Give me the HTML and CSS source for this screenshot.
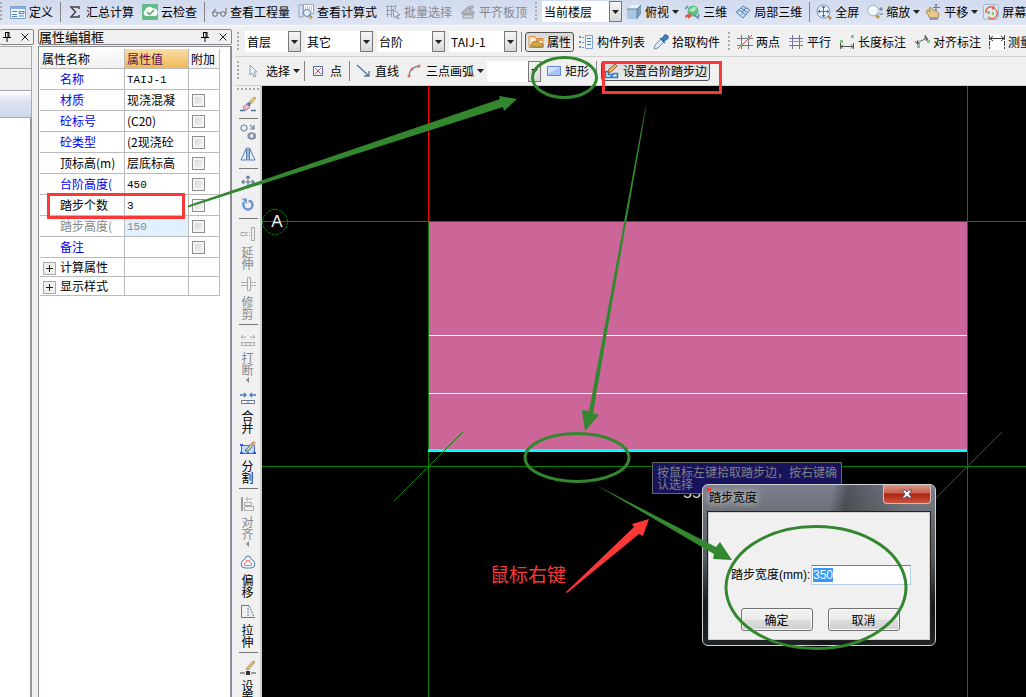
FILE: index.html
```html
<!DOCTYPE html>
<html lang="zh-CN">
<head>
<meta charset="utf-8">
<title>属性编辑框</title>
<link rel="stylesheet" href="styles.css">
</head>
<body>
<svg class="defs" width="0" height="0" aria-hidden="true">
  <symbol id="pin" viewBox="0 0 8 10"><path d="M2 .5h4M2.5 0v5M5 0v5M6 0v5M0 5.5h8M4 6v4" fill="none" stroke="#000"/></symbol>
  <symbol id="cross" viewBox="0 0 8 8"><path d="M.5.5l7 7M7.5.5l-7 7" fill="none" stroke="#222"/></symbol>
  <symbol id="down" viewBox="0 0 7 4"><path d="M0 0h7L3.500 4z" fill="#222"/></symbol>
</svg>
<div class="app">
  <header class="topbar">
    <i class="grip"></i>
    <button class="tool"><svg viewBox="0 0 16 16"><path d="M.5 2.500h15v12H.5z" fill="#f4f8fd" stroke="#7da0d0"/><path d="M1 3h14v2H1z" fill="#86aee0"/><path d="M2 7.500h5M2 10.500h5M2 12.500h5M9 7.500h5v2H9zM9 12h5" fill="none" stroke="#5580ba"/></svg>定义</button>
    <i class="sep"></i>
    <button class="tool"><svg viewBox="0 0 16 16"><path d="M12 5V3H4l4.500 5L4 13h8v-2" fill="none" stroke="#444" stroke-width="1.500"/></svg>汇总计算</button>
    <button class="tool"><svg viewBox="0 0 16 16"><rect width="16" height="16" rx="1" fill="#63bb83"/><path d="M4 12a3 3 0 0 1-1-5.500A4.500 4.500 0 0 1 11 4.500 3.500 3.500 0 0 1 12.500 12z" fill="#fff"/><path d="M5 8l2.500 2.500L12 6" fill="none" stroke="#45a96a" stroke-width="1.500"/></svg>云检查</button>
    <i class="sep"></i>
    <button class="tool"><svg viewBox="0 0 16 16"><path d="M5 5Q2 6 1.500 10M15 4v6" fill="none" stroke="#666"/><circle cx="4" cy="10" r="2.300" fill="#dfe8ee" stroke="#666"/><circle cx="12" cy="10" r="2.300" fill="#dfe8ee" stroke="#666"/><path d="M6 9.500q2-2 4 0" fill="none" stroke="#666"/></svg>查看工程量</button>
    <button class="tool"><svg viewBox="0 0 16 16"><path d="M5.500.5h10v9h-10z" fill="#fff" stroke="#9aa6ba"/><path d="M7 3h7M7 5h7M9 7h5" stroke="#8291ac" stroke-dasharray="1 1"/><path d="M1 1h4v12H1z" fill="#dce4f1" stroke="#8fa0be"/><circle cx="9" cy="9" r="3.500" fill="#e4f1fa" stroke="#557dad"/><path d="M11 11l3 3" stroke="#557dad" stroke-width="2"/><path d="M12 11l1 2 2 .5-2 .5-1 2-1-2-2-.5 2-.5z" fill="#efb036"/></svg>查看计算式</button>
    <button class="tool off" disabled><svg viewBox="0 0 16 16"><path d="M1 2.500h9M1 6.500h9M1 10.500h6M2.500 1v12M6.500 1v12M10.500 1v4" fill="none" stroke="#9aa1ae"/><path d="M8 5l7 6-3 .5 2 3-1.500.5-1.500-3-2 2z" fill="#e2e5ec" stroke="#8b919d"/></svg>批量选择</button>
    <button class="tool off" disabled><svg viewBox="0 0 16 16"><path d="M1 9l7-6 5-1v2L9 5l5 3v2H3z" fill="#b2b6bf" stroke="#969ba6"/><path d="M3 11h10v3H3z" fill="#d6d9df" stroke="#969ba6"/></svg>平齐板顶</button>
    <i class="grip wide"></i>
    <span class="combo floor"><select aria-label="楼层范围"><option>当前楼层</option></select><i><svg><use href="#down"/></svg></i></span>
    <button class="tool menu"><svg viewBox="0 0 16 16"><path d="M1 5l4-4h10v9l-4 5H1z" fill="#7c9cc0"/><path d="M1 5h10v10H1z" fill="#a8c6e2"/><path d="M1 5l4-4h10l-4 4z" fill="#e8f1f8"/><path d="M1 5h10v10M11 5l4-4" fill="none" stroke="#5f81a8"/></svg>俯视<svg class="arrow"><use href="#down"/></svg></button>
    <button class="tool"><svg viewBox="0 0 16 16"><circle cx="9" cy="7" r="5.500" fill="#5ebf83"/><path d="M5 7Q8 1 13 4L10 8z" fill="#abe6bd"/><path d="M1 5l3-3M15 10l-1 4-4-3" fill="none" stroke="#6283ac" stroke-width="1.500"/><path d="M1 14q0-4 4-4v-2l3 4-4 3v-2z" fill="#d4594a"/></svg>三维</button>
    <button class="tool"><svg viewBox="0 0 16 16"><path d="M1 8l7-6 7 4-7 8z" fill="#c5dcef" stroke="#5c88b6"/><path d="M4 6l7 5M6 4l7 5M4 11l7-7" stroke="#4b79ab"/><circle cx="5" cy="9" r="2" fill="#eef7fd" stroke="#7297c0"/></svg>局部三维</button>
    <i class="sep"></i>
    <button class="tool"><svg viewBox="0 0 16 16"><path d="M12 12l3 3" stroke="#b98a4c" stroke-width="2.500"/><circle cx="7.500" cy="7.500" r="6.500" fill="#eaf3fb" stroke="#7d95b8"/><path d="M7.500 2v11M2 7.500h11M6 4l1.500-2L9 4M6 11l1.500 2L9 11M4 6L2 7.500 4 9M11 6l2 1.500L11 9" fill="none" stroke="#4770a6"/></svg>全屏</button>
    <button class="tool menu"><svg viewBox="0 0 16 16"><path d="M9 11l3 3" stroke="#c09055" stroke-width="3"/><circle cx="6" cy="6.500" r="5.300" fill="#f4fafe" stroke="#a0b1c5"/><path d="M14 3v4M12 5h4M12 10h4" stroke="#5c7292"/></svg>缩放<svg class="arrow"><use href="#down"/></svg></button>
    <button class="tool menu"><svg viewBox="0 0 16 16"><path d="M1 7l2-1 2 2-1-4 2-.5 2 3 1-1 5 4-1 5H5z" fill="#e6c888" stroke="#ad8b50"/><path d="M4 13h9v3H5z" fill="#8b9db8"/><path d="M11 0v7M8 3.500h7M10 1.500L11 0l1 1.500" fill="none" stroke="#66758e"/></svg>平移<svg class="arrow"><use href="#down"/></svg></button>
    <button class="tool"><svg viewBox="0 0 16 16"><rect x=".5" y=".5" width="15" height="15" rx="2" fill="#d8e8f1" stroke="#9cb9cf"/><path d="M3 9a5 5 0 0 1 8-5M13 6a5 5 0 0 1-8 7" fill="none" stroke="#ea6551" stroke-width="1.500"/><path d="M10 1l3 4-4 1z" fill="#ea6551"/><path d="M4 7h3v3H4zM9 8h2v3H9z" fill="#9ac36d"/></svg>屏幕</button>
  </header>

  <div class="body">
    <aside class="dock">
      <div class="caption"><svg class="pin"><use href="#pin"/></svg><svg class="x"><use href="#cross"/></svg></div>
      <div class="tabs"><i></i><i></i><i class="sel"></i></div>
      <div class="blank"></div>
    </aside>

    <aside class="panel">
      <div class="caption"><h1>属性编辑框</h1><svg class="pin"><use href="#pin"/></svg><svg class="x"><use href="#cross"/></svg></div>
      <div class="sheet">
        <table>
          <colgroup><col class="c1"><col class="c2"><col class="c3"></colgroup>
          <thead><tr><th>属性名称</th><th class="hot">属性值</th><th>附加</th></tr></thead>
          <tbody>
            <tr><th>名称</th><td><span class="code">TAIJ-1</span></td><td></td></tr>
            <tr><th>材质</th><td>现浇混凝</td><td><input type="checkbox" aria-label="材质附加"></td></tr>
            <tr><th>砼标号</th><td>(C20)</td><td><input type="checkbox" aria-label="砼标号附加"></td></tr>
            <tr><th>砼类型</th><td>(2现浇砼</td><td><input type="checkbox" aria-label="砼类型附加"></td></tr>
            <tr class="plain"><th>顶标高(m)</th><td>层底标高</td><td><input type="checkbox" aria-label="顶标高附加"></td></tr>
            <tr><th>台阶高度(</th><td><span class="code">450</span></td><td><input type="checkbox" aria-label="台阶高度附加"></td></tr>
            <tr class="plain"><th>踏步个数</th><td><span class="code">3</span></td><td><input type="checkbox" aria-label="踏步个数附加"></td></tr>
            <tr class="dim"><th>踏步高度(</th><td><span class="code">150</span></td><td><input type="checkbox" aria-label="踏步高度附加"></td></tr>
            <tr><th>备注</th><td></td><td><input type="checkbox" aria-label="备注附加"></td></tr>
            <tr class="group"><th><button class="plus" aria-label="展开计算属性"></button>计算属性</th><td></td><td></td></tr>
            <tr class="group"><th><button class="plus" aria-label="展开显示样式"></button>显示样式</th><td></td><td></td></tr>
          </tbody>
        </table>
      </div>
    </aside>

    <main class="work">
      <div class="bar">
        <i class="grip"></i>
        <span class="combo first"><select aria-label="楼层"><option>首层</option></select><i><svg><use href="#down"/></svg></i></span>
        <span class="combo"><select aria-label="类别"><option>其它</option></select><i><svg><use href="#down"/></svg></i></span>
        <span class="combo"><select aria-label="构件类型"><option>台阶</option></select><i><svg><use href="#down"/></svg></i></span>
        <span class="combo"><select aria-label="构件"><option>TAIJ-1</option></select><i><svg><use href="#down"/></svg></i></span>
        <i class="sep"></i>
        <button class="tool pressed"><svg viewBox="0 0 16 16"><path d="M1 2.500h6l1 2h7v9H1z" fill="#fbe7c1" stroke="#d98a46"/><path d="M8 5h7v2H8z" fill="#e8a15d"/><path d="M2 12l3-4 5-1 1 2 4 1v3H5z" fill="#d2a63f" stroke="#7b6a34" stroke-width=".7"/></svg>属性</button>
        <button class="tool"><svg viewBox="0 0 16 16"><path d="M1 2h2v2H1zM1 7h2v2H1zM1 12h2v2H1z" fill="#7b8daa"/><path d="M4 3.500h2M4 8.500h2M4 13.500h2" stroke="#7b8daa"/><path d="M7.500 1.500h7v13h-7z" fill="#eef4fc" stroke="#83a0c8"/><path d="M9 4.500h4M9 7.500h4M9 10.500h4" stroke="#4a78b5"/></svg>构件列表</button>
        <button class="tool"><svg viewBox="0 0 16 16"><path d="M1 15l1-4 6-6 3 3-6 6z" fill="#d8eafa" stroke="#7192b8"/><path d="M7 4l5 5M9 5l3-4q3 0 3 3l-4 3z" fill="#4a83c3" stroke="#396fa9" stroke-width="1.500"/></svg>拾取构件</button>
        <i class="grip wide"></i>
        <button class="tool"><svg viewBox="0 0 16 16"><path d="M4.500 1v14M11.500 1v14M0 4.500h16M0 11.500h16" stroke="#747486"/><path d="M1 15L15 1" stroke="#c14c4c"/><circle cx="4.500" cy="11.500" r="1.500" fill="#65b66c"/><circle cx="11.500" cy="4.500" r="1.500" fill="#65b66c"/></svg>两点</button>
        <button class="tool"><svg viewBox="0 0 16 16"><path d="M4.500 1v14M11.500 1v14M1 4.500h14M1 11.500h14" stroke="#70749a"/><path d="M1 7.500h14" stroke="#d67c7c"/></svg>平行</button>
        <button class="tool"><svg viewBox="0 0 16 16"><path d="M1.500 9v6M14.500 9v6M1 12.500h14M4 10.500l-2 2 2 2M12 10.500l2 2-2 2" fill="none" stroke="#555"/><path d="M1 6h3v3H1zM12 1h3v3h-3z" fill="#7cc87c"/></svg>长度标注</button>
        <button class="tool"><svg viewBox="0 0 16 16"><path d="M1 7l3 4M11 1l3 5M3 9l10-5M4 6L3 9l3 1M10 3l3 1-1 3" fill="none" stroke="#555"/><path d="M3 11h3v3H3zM13 6h3v3h-3z" fill="#7cc87c"/></svg>对齐标注</button>
        <button class="tool"><svg viewBox="0 0 16 16"><path d="M0 0h16v16H0z" fill="#fff"/><path d="M.5 1v14M15.500 1v14" stroke="#444" stroke-dasharray="5 1"/><path d="M1 4.500h14M4 2L1 4.500 4 7M12 2l3 2.500L12 7" fill="none" stroke="#333"/></svg>测量</button>
      </div>
      <div class="bar draw">
        <i class="grip"></i>
        <button class="tool menu"><svg viewBox="0 0 16 16"><path d="M3 2v10l2-2 2 4 2-1-2-4h3z" fill="#f5f8fb" stroke="#8e9eb2"/></svg>选择<svg class="arrow"><use href="#down"/></svg></button>
        <i class="sep"></i>
        <button class="tool"><svg viewBox="0 0 16 16"><path d="M2.500 3.500h9v9h-9z" fill="#f4f7ff" stroke="#5565a5"/><path d="M4 5l6 6M10 5l-6 6" stroke="#c44b5a"/></svg>点</button>
        <i class="sep"></i>
        <button class="tool"><svg viewBox="0 0 16 16"><path d="M1 2l12 11M13 8v5H8" fill="none" stroke="#4c75a7" stroke-width="1.300"/></svg>直线</button>
        <button class="tool menu"><svg viewBox="0 0 16 16"><path d="M2 14Q2 4 13 3" fill="none" stroke="#7190b3" stroke-width="1.300"/><circle cx="2" cy="13" r="1.500" fill="#e16a50"/><circle cx="5" cy="6" r="1.500" fill="#e16a50"/><circle cx="12" cy="3" r="1.500" fill="#e16a50"/></svg>三点画弧<svg class="arrow"><use href="#down"/></svg></button>
        <span class="combo first"><select aria-label="画弧参数"><option></option></select><i><svg><use href="#down"/></svg></i></span>
        <button class="tool"><svg viewBox="0 0 16 16"><path d="M1.500 3.500h13v9h-13z" fill="#a9c6f8" stroke="#6488cf"/><path d="M2 4h12L2 11z" fill="#cfdffc"/></svg>矩形</button>
        <i class="sep"></i>
        <button class="tool pressed"><svg viewBox="0 0 16 16"><path d="M1.500 14.500v-6h3v3h4M1.500 14.500h12v-4h-3M7 14l3-4" fill="#c5e4f7" stroke="#2b7bbd" stroke-width="1.500"/><path d="M4 10l1-4 6-5 2 2-6 6z" fill="#f0b35e" stroke="#935e35"/></svg>设置台阶踏步边</button>
      </div>

      <div class="stage">
        <nav class="side">
          <i class="hgrip"></i>
          <button aria-label="删除"><svg viewBox="0 0 16 16"><path d="M0 14.500h5M11 14.500h5" stroke="#53749c" stroke-width="1.500"/><path d="M9 6l5-5 2 1-5 6z" fill="#eac46e" stroke="#a57c44" stroke-width=".6"/><path d="M6 8l3-2 2 2-2 3z" fill="#527db8"/><path d="M3 11l4-3 3 3-3 3H4z" fill="#e8b5cb" stroke="#9a6580" stroke-width=".7"/></svg></button>
          <i class="hsep"></i>
          <button aria-label="复制"><svg viewBox="0 0 16 16"><g fill="none" stroke="#7289a5" stroke-width="1.200"><circle cx="4" cy="4" r="3"/><circle cx="11" cy="12" r="3"/><circle cx="12.500" cy="12" r="3"/><path d="M10 1l4 4M14 1v4h-4"/></g></svg></button>
          <button aria-label="镜像"><svg viewBox="0 0 16 16"><path d="M6.500 2v12H1zM9.500 2v12H15z" fill="#e9f1fc" stroke="#547db4"/><path d="M8 1v14" stroke="#547db4"/></svg></button>
          <i class="hsep"></i>
          <button aria-label="移动"><svg viewBox="0 0 16 16"><path d="M8 2v12M2 8h12M6 4l2-2 2 2M6 12l2 2 2-2M4 6L2 8l2 2M12 6l2 2-2 2" fill="none" stroke="#61799a" stroke-width="1.200"/></svg></button>
          <button aria-label="旋转"><svg viewBox="0 0 16 16"><path d="M3.500 6v3a4.500 4.500 0 0 0 9 0q0-4-4-4" fill="none" stroke="#7297d4" stroke-width="2.500"/><path d="M1.500 2.500H7V8z" fill="#7297d4"/></svg></button>
          <i class="hsep"></i>
          <button class="tall off"><svg viewBox="0 0 16 16"><path d="M11.500 1.500h3v13h-3zM1 6.500h5v3H1z" fill="none" stroke="#aaa"/><path d="M7 6.500h4M7 9.500h4" stroke="#aaa" stroke-dasharray="1 1"/></svg><span>延伸</span></button>
          <button class="tall off"><svg viewBox="0 0 16 16"><path d="M7.500 1.500h3v13h-3z" fill="none" stroke="#aaa"/><path d="M1 6.500h6M1 9.500h6" stroke="#aaa"/><path d="M11 6.500h5M11 9.500h5" stroke="#aaa" stroke-dasharray="2 1"/></svg><span>修剪</span></button>
          <i class="hsep"></i>
          <button class="tall more off"><svg viewBox="0 0 16 16"><path d="M1 5h5M10 5h5M3 3L1 5l2 2M13 3l2 2-2 2M1.500 10.500h13v3h-13zM6 10v4M10 10v4" fill="none" stroke="#aaa"/></svg><span>打断</span></button>
          <button class="tall"><svg viewBox="0 0 16 16"><path d="M0 5h6M10 5h6M4 3l2 2-2 2M12 3l-2 2 2 2" fill="none" stroke="#4c78bd" stroke-width="1.300"/><path d="M1.500 10.500h13v3h-13zM8 10v4" fill="#fff" stroke="#65799d"/></svg><span>合并</span></button>
          <button class="tall"><svg viewBox="0 0 16 16"><path d="M1.500 5.500h13v8h-13z" fill="#b9dbff" stroke="#466bdc"/><path d="M0 4h3v2H0zM0 12h3v2H0zM7 12h2v2H7zM13 12h3v2h-3z" fill="#3c55db"/><path d="M5 11l8-9 2 1-7 8z" fill="#eadfca" stroke="#5b5b51"/><path d="M11 4l3-3 2 2-3 3z" fill="#e2a07a"/></svg><span>分割</span></button>
          <i class="hsep"></i>
          <button class="tall more off"><svg viewBox="0 0 16 16"><path d="M2 1v14" stroke="#999" stroke-width="2"/><path d="M4.500 6.500h7v3h-7zM4.500 10.500h9v4h-9zM6 3h6M8 1L6 3l2 2" fill="none" stroke="#aaa"/></svg><span>对齐</span></button>
          <button class="tall"><svg viewBox="0 0 16 16"><path d="M5 5a3 3 0 0 1 6 0q4 2 4 5 0 4-4 4H5q-4 0-4-4 0-3 4-5z" fill="#eef6fd" stroke="#5680ad"/><path d="M6.500 6.500h3v2q3 0 2 3h-7q-1-3 2-3z" fill="#fff" stroke="#e27a70"/></svg><span>偏移</span></button>
          <button class="tall"><svg viewBox="0 0 16 16"><path d="M9 1.500H1.500v12H15" fill="none" stroke="#547da8"/><path d="M9 2l5 11M8 4v8" fill="none" stroke="#547da8" stroke-dasharray="2 1"/></svg><span>拉伸</span></button>
          <i class="hsep"></i>
          <button class="tall"><svg viewBox="0 0 16 16"><path d="M0 13h5M11 13h5" stroke="#444"/><path d="M6 11h4v4H6z" fill="#333"/><path d="M6 9l7-8 2 1-7 8z" fill="#e9c36f" stroke="#9c7444" stroke-width=".7"/></svg><span>设置</span></button>
        </nav>

        <div class="canvas">
          <svg class="plan" width="764" height="611" viewBox="262 86 764 611">
            <path d="M429 222h538v228H429z" fill="#cc6699"/>
            <g shape-rendering="crispEdges" fill="none">
              <path d="M429 335.500h538M429 393.500h538" stroke="#fff"/>
              <path d="M428.500 222v475M967.500 222v475M262 466.500h2000" stroke="#008000"/>
              <path d="M428.500 86v136M967.500 86v136M262 221.500h2000" stroke="#f00"/>
              <path d="M428 450.500h539" stroke="#0ff" stroke-width="3"/>
              <path d="M394 501l69-69M933 501l69-69" stroke="#008000"/>
            </g>
            <path d="M275 209l6 2 5 5 2 6-2 6-5 5-6 2-6-2-5-5-2-6 2-6 5-5z" fill="none" stroke="#008000" stroke-dasharray="3 1"/>
            <text class="axis" x="277" y="227" text-anchor="middle">A</text>
            <text class="dim-text" x="683" y="498">55</text>
          </svg>
          <p class="hint">按鼠标左键拾取踏步边，按右键确认选择</p>
          <form class="dialog">
            <header><h2>踏步宽度</h2><button type="button" class="close" aria-label="关闭"><svg viewBox="0 0 12 10"><path d="M1 1h3l2 2 2-2h3L8 5l3 4H8L6 7 4 9H1l3-4z" fill="#fff" stroke="#545367"/></svg></button></header>
            <div class="client">
              <div class="field"><label for="w">踏步宽度(mm):</label><input id="w" type="text" value="350"></div>
              <div class="actions"><button type="button">确定</button><button type="button">取消</button></div>
            </div>
          </form>
        </div>
      </div>
    </main>
  </div>

  <svg class="notes" width="1026" height="697" viewBox="0 0 1026 697" aria-hidden="true">
    <defs><linearGradient id="fade" x1="0" y1="100" x2="0" y2="135" gradientUnits="userSpaceOnUse"><stop offset="0" stop-color="#32872f" stop-opacity=".3"/><stop offset="1" stop-color="#32872f"/></linearGradient></defs>
    <g fill="none" stroke="#fb3838" stroke-width="3"><path d="M48.500 194.500h135v23h-135zM603.500 62.500h117v30h-117z"/></g>
    <g fill="none" stroke="#32872f" stroke-width="3"><ellipse cx="564.500" cy="77.500" rx="32" ry="20"/><ellipse cx="577" cy="457.500" rx="52" ry="24"/><ellipse cx="816" cy="587.500" rx="90" ry="61"/></g>
    <g fill="#32872f"><path d="M188 205.500L500 99l-1-3 18 3-13 12-1-4L188 207.500z"/><path fill="url(#fade)" d="M645.500 106L589 411l-7-1 3 21 14-16-6-2L646.500 106z"/><path d="M596 485l120 62 4-5 12 18-19-1 1-5z"/></g>
    <path d="M566 592l68-65-2-3 17-5-6 17-4-2-72 59z" fill="#fb3838"/>
    <path d="M707 488h4v3h-4z" fill="#fb3838"/>
    <text class="note" x="490" y="582">鼠标右键</text>
  </svg>
</div>
</body>
</html>
```

FILE: styles.css
```css
* { box-sizing: border-box; }
body { margin: 0; font: 12px/16px "Noto Sans CJK SC", sans-serif; color: #000; background: #f0f0f0; }
button, select, input { font: inherit; color: inherit; }
i { font-style: normal; }
h1, h2, p { margin: 0; font-weight: normal; }
.defs { position: absolute; }
.app { position: relative; display: flex; flex-direction: column; height: 100vh; overflow: hidden; }

/* toolbars */
.topbar, .bar { display: flex; align-items: center; overflow: hidden; flex: none; white-space: nowrap; }
.topbar { height: 26px; padding-bottom: 2px; background: linear-gradient(#d2daee, #dfe5f4); border-bottom: 1px solid #f8f9fc; }
.bar { height: 30px; padding-left: 2px; background: #f0f0f0; border-bottom: 1px solid #d0d0d0; }
.bar.draw { height: 29px; }
.tool { display: flex; flex: none; align-items: center; gap: 3px; height: 20px; padding: 0 4px; border: 0; background: none; }
.tool svg { width: 16px; height: 16px; flex: none; }
.tool .arrow { width: 7px; height: 4px; }
.tool.menu { padding-right: 1px; }
.tool.off, .side .off { color: #85888f; }
.tool.pressed { padding: 0 2px; border: 1px solid #505050; border-radius: 3px; background: linear-gradient(#d8d8d8, #eee); }
.draw .pressed { margin-left: 2px; }
.sep { flex: none; width: 1px; height: 20px; margin: 0 2px 0 3px; background: #858585; }
.bar:not(.draw) .sep { margin: 0 3px 0 0; }
.grip { flex: none; width: 2px; height: 20px; margin-right: 4px; background: repeating-linear-gradient(#aaa 0 2px, transparent 2px 4px); }
.grip.wide { margin: 0 5px 0 4px; }
.bar .grip.wide { margin: 0 3px 0 4px; }
.combo { position: relative; flex: none; width: 68px; height: 21px; margin-right: 4px; }
.combo.first { width: 56px; margin-left: 2px; }
.draw .combo.first { width: 54px; margin-right: 1px; }
.combo.floor { width: 80px; margin-right: 0; }
.combo select { width: 100%; height: 21px; padding: 0 0 0 2px; border: 0; background: #fff; appearance: none; }
.combo i { position: absolute; top: 0; right: 0; display: flex; align-items: center; justify-content: center; width: 13px; height: 21px; border: 1px solid #777; background: linear-gradient(#f5f5f5, #d8d8d8); pointer-events: none; }
.combo i svg { width: 7px; height: 4px; }

/* docked panels */
.body { display: flex; flex: 1; min-height: 0; }
.caption { display: flex; align-items: center; height: 16px; border: 1px solid #858585; border-radius: 2px; background: #f0f0f0; }
.caption h1 { flex: 1; font-size: 13px; line-height: 14px; }
.caption .pin { width: 8px; height: 10px; }
.caption .x { width: 8px; height: 8px; margin: 0 4px 0 10px; }
.dock { display: flex; flex-direction: column; width: 36px; flex: none; padding: 3px 2px 0 0; background: #f0f0f0; }
.dock .caption { justify-content: flex-end; border-left: 0; }
.tabs { display: grid; grid-template-rows: 22px 22px 27px; margin: 1px 2px 0 0; border: 1px solid #aaa; border-width: 1px 1px 0 0; }
.tabs i { border-bottom: 1px solid #a8a8a8; }
.tabs .sel { background: linear-gradient(#fff, #dce3f3 40%, #cfd8ec); }
.blank { flex: 1; margin-right: 2px; background: #fff; border-right: 2px solid #9595a0; }
.panel { display: flex; flex-direction: column; width: 196px; flex: none; padding: 3px 0 0 2px; }
.sheet { flex: 1; margin-top: 1px; padding: 2px 0 0 1px; background: #fff; border: solid #8c8c94; border-width: 1px 2px 0 1px; }
table { width: 180px; border-collapse: separate; border-spacing: 0; table-layout: fixed; }
.c1 { width: 85px; }
.c2 { width: 64px; }
.c3 { width: 31px; }
th, td { height: 21px; padding: 0 0 0 2px; border: solid #bbb; border-width: 0 1px 1px 0; font-weight: normal; text-align: left; line-height: 16px; white-space: nowrap; overflow: hidden; }
thead th { height: 20px; background: linear-gradient(#fcfcfc, #f0f0f0); }
thead .hot { background: linear-gradient(#fbdda4, #eeb958); color: #5c104a; }
tbody th { padding-left: 20px; color: #00e; }
.plain th, .group th { color: #000; }
.dim th, .dim td { color: #888; }
.dim td:nth-child(2) { background: #e0f0ff; }
.group th { height: 19px; padding-left: 3px; }
.group td { height: 19px; }
.code { font-family: "Liberation Mono", monospace; font-size: 11px; }
td input { display: block; appearance: none; width: 13px; height: 13px; margin: 0 0 0 1px; border: 1px solid #8e8f8f; background: linear-gradient(135deg, #cdd2d8, #f8f8f8); box-shadow: inset 0 0 0 2px #f4f4f4; }
.plus { width: 13px; height: 13px; margin: 0 4px 0 0; padding: 0; border: 1px solid #aaa; vertical-align: -2px; background: linear-gradient(#222, #222) center / 7px 1px no-repeat, linear-gradient(#222, #222) center / 1px 7px no-repeat, #f0f0f0; }

/* work area */
.work { display: flex; flex-direction: column; flex: 1; min-width: 0; margin-left: 3px; padding-top: 1px; }
.stage { display: flex; flex: 1; min-height: 0; }
.side { display: flex; flex-direction: column; flex: none; width: 27px; overflow: hidden; background: #f0f0f0; border-right: 2px solid #cfd2d6; }
.hgrip { flex: none; height: 2px; margin: 2px 1px 3px 2px; background: repeating-linear-gradient(90deg, #aaa 0 2px, transparent 2px 4px); }
.hsep { flex: none; height: 1px; margin: 3px 2px 2px 4px; background: #777; }
.side button { display: flex; flex-direction: column; align-items: center; justify-content: center; flex: none; height: 22px; padding: 0; border: 0; background: none; }
.side svg { width: 16px; height: 16px; flex: none; }
.side .tall { justify-content: flex-start; gap: 4px; height: 50px; padding: 5px 0 0; }
.side .tall span { width: 12px; font-size: 12px; line-height: 12px; word-break: break-all; }
.side .more { height: 58px; }
.side .more::after { content: ""; margin-top: -3px; border: solid transparent; border-width: 3px 3px 3px 0; border-right-color: #888; }
.canvas { position: relative; flex: 1; min-width: 0; overflow: hidden; background: #000; }
.plan { display: block; overflow: visible; }
.axis { fill: #eee; font: 17px "Liberation Sans", sans-serif; }
.dim-text { fill: #ddd; font: 16px "Liberation Sans", sans-serif; }
.hint { position: absolute; left: 390px; top: 376px; width: 190px; height: 32px; padding: 3px 4px; border: 1px solid #666; background: #17145c; color: #80808a; line-height: 12px; }
.dialog { position: absolute; left: 440px; top: 398px; width: 234px; padding: 0 5px 5px; border: 1px solid #d0d2d4; border-radius: 6px; background: linear-gradient(100deg, transparent 50%, #0005 56%, transparent 80%), linear-gradient(#7c7f91, #6c7076 18%, #555a5e 45%, #15191c 75%, #202427); }
.dialog header { display: flex; justify-content: space-between; height: 27px; }
.dialog h2 { padding: 4px 8px 0 1px; font-size: 12px; line-height: 16px; text-shadow: 0 0 8px #bbb, 0 0 8px #bbb, 0 0 5px #bbb; }
.close { display: flex; align-items: center; justify-content: center; width: 48px; height: 19px; margin-right: -1px; padding: 0; border: 1px solid #ddb8b0; border-top: 0; border-radius: 0 0 4px 4px; background: linear-gradient(#dc9687, #c8604c 45%, #ad210e 50%, #cc563e); }
.close svg { width: 12px; height: 10px; }
.client { display: flex; flex-direction: column; gap: 23px; padding: 52px 0 8px; border: 1px solid #d0d0d0; background: #f0f0f0; box-shadow: 0 0 0 1px #222; }
.field { display: flex; align-items: center; padding: 0 18px 0 22px; font-family: "Liberation Sans", "Noto Sans CJK SC", sans-serif; }
.field label { flex: none; width: 80px; white-space: nowrap; }
.field input { flex: 1; min-width: 0; height: 20px; padding: 0 1px; border: 1px solid #b5cfe7; border-top-color: #4d88c0; outline: 0; color: #fff; background: linear-gradient(#39f, #39f) 1px 2px / 20px 14px no-repeat, #fff; }
.actions { display: flex; justify-content: center; gap: 15px; padding-left: 2px; }
.actions button { width: 72px; height: 23px; padding: 0; border: 1px solid #707070; border-radius: 3px; background: linear-gradient(#f2f2f2, #ebebeb 50%, #ddd 50%, #cfcfcf); box-shadow: inset 0 0 0 1px #fafafa; }

/* markup laid over the window */
.notes { position: absolute; left: 0; top: 0; pointer-events: none; }
.note { fill: #fb3838; font-size: 19px; }
```
